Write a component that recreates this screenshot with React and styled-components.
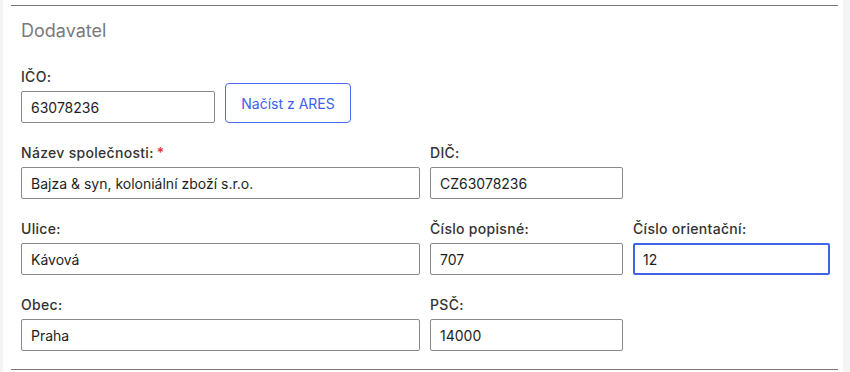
import styled, { createGlobalStyle } from "styled-components";

const GlobalStyle = createGlobalStyle`
  body {
    margin: 0;
    background: #f4f4f4;
    font-family: Inter, "Liberation Sans", Arial, sans-serif;
  }
`;

export default function App() {
  return (
    <>
      <GlobalStyle />
      <Page>
        <Section>
          <Title>Dodavatel</Title>

          <IcoRow>
            <Field>
              <Label>IČO:</Label>
              <Input $width="194px" defaultValue="63078236" />
            </Field>
            <AresButton type="button">Načíst z ARES</AresButton>
          </IcoRow>

          <Grid>
            <Field>
              <Label>
                Název společnosti:<Required>*</Required>
              </Label>
              <Input defaultValue="Bajza & syn, koloniální zboží s.r.o." />
            </Field>
            <Field>
              <Label>DIČ:</Label>
              <Input defaultValue="CZ63078236" />
            </Field>
            <span />

            <Field>
              <Label>Ulice:</Label>
              <Input defaultValue="Kávová" />
            </Field>
            <Field>
              <Label>Číslo popisné:</Label>
              <Input defaultValue="707" />
            </Field>
            <Field>
              <Label>Číslo orientační:</Label>
              <Input $focused defaultValue="12" />
            </Field>

            <Field>
              <Label>Obec:</Label>
              <Input defaultValue="Praha" />
            </Field>
            <Field>
              <Label>PSČ:</Label>
              <Input defaultValue="14000" />
            </Field>
          </Grid>
        </Section>
      </Page>
    </>
  );
}

const Page = styled.main`
  margin-left: 3px;
  width: 840px;
  height: 372px;
  background: #ffffff;
  padding: 5px 5px 0 8px;
  box-sizing: border-box;
`;

const Section = styled.section`
  border-top: 1px solid #777777;
  border-bottom: 1px solid #777777;
  padding: 0 10px 18px;
`;

const Title = styled.h2`
  margin: 13px 0 0;
  font-size: 18px;
  line-height: 24px;
  font-weight: 400;
  color: #7a7a7a;
`;

const IcoRow = styled.div`
  display: flex;
  align-items: flex-end;
  gap: 10px;
  margin-top: 26px;
`;

const Grid = styled.div`
  display: grid;
  grid-template-columns: 399px 193px 197px;
  column-gap: 10px;
  row-gap: 22px;
  margin-top: 22px;
`;

const Field = styled.div`
  display: flex;
  flex-direction: column;
  gap: 6px;
`;

const Label = styled.label`
  font-size: 14px;
  line-height: 16px;
  font-weight: 500;
  letter-spacing: 0.3px;
  color: #333333;
`;

const Required = styled.span`
  color: #e5322d;
  margin-left: 3px;
`;

const Input = styled.input`
  width: ${(p) => p.$width || "100%"};
  height: 32px;
  box-sizing: border-box;
  border: ${(p) => (p.$focused ? "2px solid #3f63e6" : "1px solid #8a8a8a")};
  border-radius: 2px;
  padding: 0 ${(p) => (p.$focused ? "8px" : "9px")};
  font-family: Inter, "Liberation Sans", Arial, sans-serif;
  font-size: 14px;
  color: #1e1e1e;
  background: #ffffff;
  outline: none;
`;

const AresButton = styled.button`
  width: 126px;
  height: 40px;
  border: 1px solid #4a6af5;
  border-radius: 4px;
  background: #ffffff;
  color: #3f5ff2;
  font-family: Inter, "Liberation Sans", Arial, sans-serif;
  font-size: 14px;
  cursor: pointer;
`;
